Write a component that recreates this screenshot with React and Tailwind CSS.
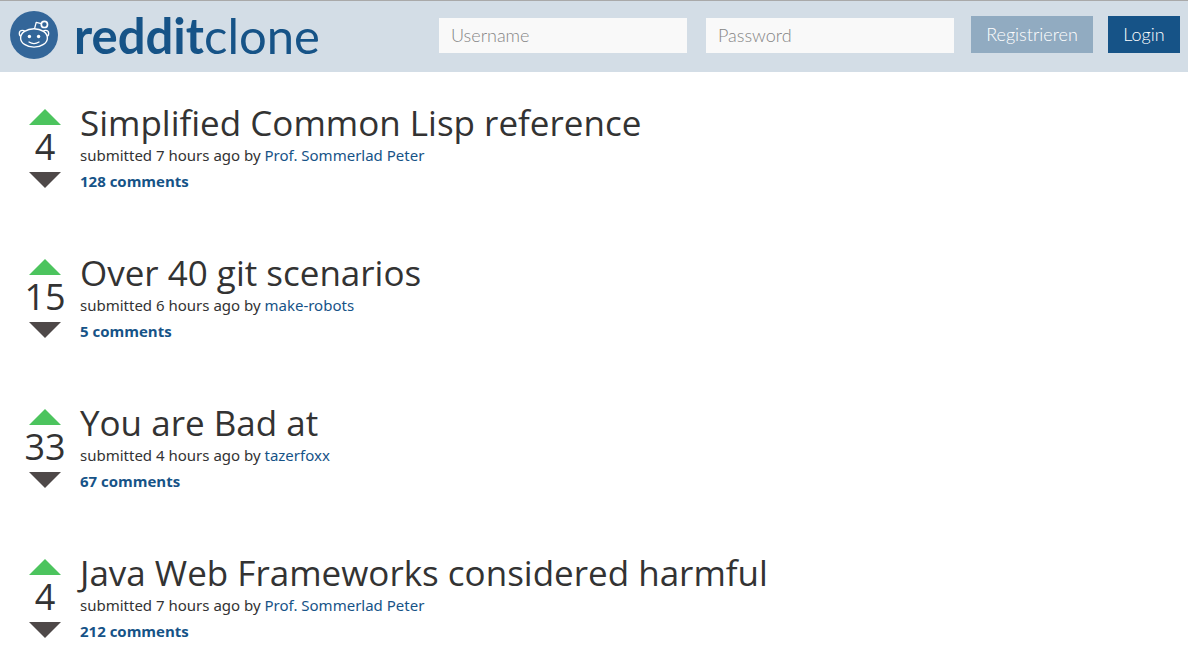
const posts = [
  { id: 1, votes: 4, title: "Simplified Common Lisp reference", hours: 7, author: "Prof. Sommerlad Peter", comments: 128 },
  { id: 2, votes: 15, title: "Over 40 git scenarios", hours: 6, author: "make-robots", comments: 5 },
  { id: 3, votes: 33, title: "You are Bad at", hours: 4, author: "tazerfoxx", comments: 67 },
  { id: 4, votes: 4, title: "Java Web Frameworks considered harmful", hours: 7, author: "Prof. Sommerlad Peter", comments: 212 },
];

function Logo() {
  return (
    <svg className="size-12 shrink-0" viewBox="0 0 48 48" fill="none" stroke="#fff" strokeWidth="1.3" aria-hidden="true">
      <circle cx="24" cy="24" r="24" fill="#336699" stroke="none" />
      <path d="M24.5 17.8 L26.2 11.4 L31.2 12.6" strokeLinejoin="round" />
      <circle cx="34.4" cy="13.4" r="3.1" strokeWidth="1.7" />
      <circle cx="12.4" cy="22.4" r="3.1" />
      <circle cx="35.6" cy="22.4" r="3.1" />
      <ellipse cx="24" cy="26.9" rx="13.4" ry="9.2" fill="#336699" strokeWidth="1.4" />
      <circle cx="19.4" cy="25.5" r="1.7" fill="#fff" stroke="none" />
      <circle cx="28.6" cy="25.5" r="1.7" fill="#fff" stroke="none" />
      <path d="M19 31 Q24 34.2 29 31" strokeLinecap="round" />
    </svg>
  );
}

function Header() {
  return (
    <header className="flex h-18 items-start justify-between border-t border-[#a9a9a9] bg-[#d3dde6] pr-2 pl-2.5">
      <a href="#home" className="flex items-center gap-4 pt-2.5 text-[#165387]">
        <Logo />
        <span className="font-['Lato',sans-serif] text-[49px] leading-12">
          <b>reddit</b>clone
        </span>
      </a>
      <form className="flex items-end pt-[15px] font-['Lato',sans-serif] text-lg font-light" onSubmit={(e) => e.preventDefault()}>
        <input
          aria-label="Username"
          placeholder="Username"
          className="mr-[19px] h-[35px] w-62 bg-[#f9f9f9] px-3 pb-0.5 outline-none placeholder:text-[#858585]"
        />
        <input
          type="password"
          aria-label="Password"
          placeholder="Password"
          className="mr-[17px] h-[35px] w-62 bg-[#f9f9f9] px-3 pb-0.5 outline-none placeholder:text-[#858585]"
        />
        <button type="button" className="mr-[15px] h-[37px] w-[122px] bg-[#91abc1] pb-0.5 text-white">Registrieren</button>
        <button type="submit" className="h-[37px] w-18 bg-[#165387] pb-0.5 text-white">Login</button>
      </form>
    </header>
  );
}

function Post({ post }) {
  return (
    <article className="flex gap-2.5">
      <div className="flex w-[50px] flex-col items-center pt-2">
        <button aria-label="Upvote">
          <svg className="block h-4 w-8" viewBox="0 0 32 16"><path d="M0 16 L16 0 L32 16 Z" fill="#4cc45e" /></svg>
        </button>
        <span className="pb-[3px] font-['Open_Sans',sans-serif] text-4xl leading-11">{post.votes}</span>
        <button aria-label="Downvote">
          <svg className="block h-4 w-8" viewBox="0 0 32 16"><path d="M0 0 L16 16 L32 0 Z" fill="#4e4848" /></svg>
        </button>
      </div>
      <div className="text-[15px]">
        <h2 className="text-[35px] leading-11">{post.title}</h2>
        <p className="font-['Noto_Sans',sans-serif] leading-5">
          submitted {post.hours} hours ago by <a href="#author" className="text-[#165387]">{post.author}</a>
        </p>
        <a href="#comments" className="block pt-1 leading-6 font-bold text-[#165387]">{post.comments} comments</a>
      </div>
    </article>
  );
}

export default function App() {
  return (
    <div className="font-['Open_Sans',sans-serif] text-[#333]">
      <Header />
      <main className="flex flex-col gap-[58px] px-5 pt-[29px]">
        {posts.map((post) => <Post key={post.id} post={post} />)}
      </main>
    </div>
  );
}
